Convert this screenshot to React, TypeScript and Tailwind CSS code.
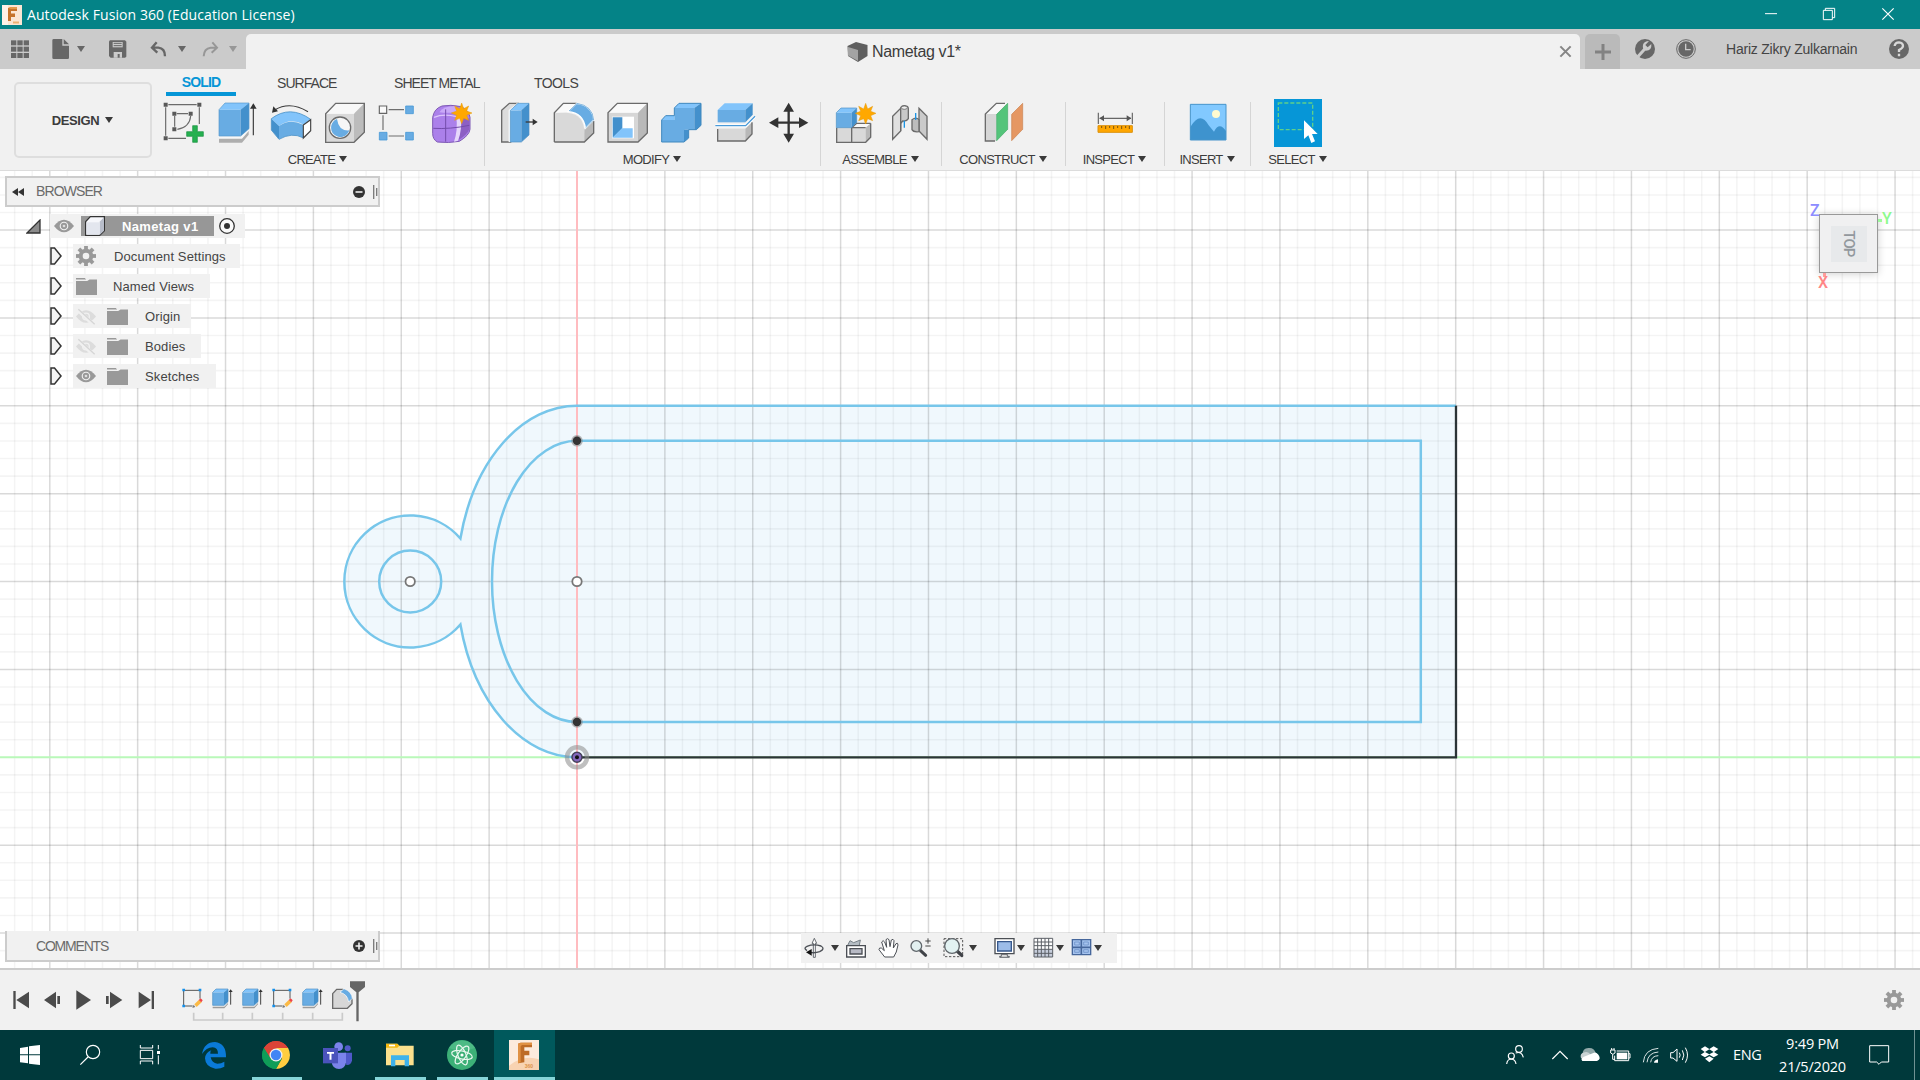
import React from "react";

type IconProps = { vb: string; className?: string; children: React.ReactNode };

function Ic({ vb, className = "", children }: IconProps) {
  return (
    <svg viewBox={vb} className={"block shrink-0 overflow-visible " + className} fill="none">
      {children}
    </svg>
  );
}

const BLUE = "#68ace3";
const LIGHT = "#82c4fb";
const DARK = "#4390cc";
const EDGE = "#6b6b6b";
const STAR = "1385,309 1391,326 1406,318 1400,333 1416,339 1400,346 1406,361 1391,355 1385,371 1379,355 1364,361 1370,346 1354,339 1370,333 1364,318 1379,326";

function Caret({ className = "", color = "#3a3a3a" }: { className?: string; color?: string }) {
  return (
    <svg viewBox="0 0 10 10" className={"block h-[10px] w-[10px] shrink-0 " + className}>
      <path d="M1 2H9L5 8Z" fill={color} />
    </svg>
  );
}

/* ---------- Window chrome ---------- */

function TitleBar() {
  return (
    <div className="flex h-[29px] items-center bg-[#048387] text-white">
      <svg viewBox="0 0 20 20" className="ml-[2px] h-5 w-5">
        <rect width="20" height="20" fill="#fbe6d3" />
        <path d="M0 0H6V20H0Z" fill="#fdf2e8" />
        <path d="M6 3H15V6H9V8.500H13V12H9V16H6Z" fill="#c5732b" />
        <path d="M6 3L8 2H15V4H9Z" fill="#e39a4c" />
        <rect x="11" y="16.500" width="6" height="2" fill="#ecb173" />
      </svg>
      <span className="ml-[5px] whitespace-nowrap text-[14px] leading-none tracking-[0.08px]" style={{ fontFamily: '"Open Sans", sans-serif' }}>
        Autodesk Fusion 360 (Education License)
      </span>
      <div className="ml-auto flex h-full">
        <Ic vb="675 0 174 87" className="h-[29px] w-[58px]"><path d="M675 41H711" stroke="#fff" strokeWidth="3" /></Ic>
        <Ic vb="849 0 177 87" className="h-[29px] w-[59px]"><path d="M850 31H877V59H850ZM856 31V25H884V53H877" stroke="#fff" strokeWidth="3" /></Ic>
        <Ic vb="1026 0 114 87" className="h-[29px] w-[38px]"><path d="M1027 25L1061 59M1061 25L1027 59" stroke="#fff" strokeWidth="3.500" /></Ic>
      </div>
    </div>
  );
}

function TabStrip() {
  const g = "#676767";
  return (
    <div className="flex h-10 bg-[#cbcbcb]">
      <div className="flex h-10 w-[246px] items-center">
        <Ic vb="30 117 60 60" className="ml-[10px] h-5 w-5">
          {[0, 1, 2].map((r) => [0, 1, 2].map((c) => <rect key={r + "-" + c} x={33 + c * 19} y={121 + r * 19} width="16" height="15" fill={g} />))}
        </Ic>
        <Ic vb="156 117 60 60" className="ml-[22px] h-5 w-5">
          <path d="M161 117H187V137H207V173Q207 177 203 177H161Q157 177 157 173V121Q157 117 161 117Z" fill={g} />
          <path d="M191 117L207 133H191Z" fill={g} />
        </Ic>
        <Caret className="ml-[4px]" color={g} />
        <Ic vb="324 117 60 60" className="ml-[22px] h-5 w-5">
          <path d="M330 121H375L379 125V170L375 173H332L327 168V124Z" fill={g} />
          <path d="M338 126H368V142H338Z" fill="#cbcbcb" />
          <path d="M341 130H365M341 137H365" stroke={g} strokeWidth="3" />
          <path d="M341 173V156H366V173H359V162H353V173Z" fill="#cbcbcb" />
        </Ic>
        <Ic vb="447 117 60 60" className="ml-[21px] h-5 w-5"><path d="M470 127L456 143L472 158M457 143H475Q495 145 495 169" stroke={g} strokeWidth="7" /></Ic>
        <Caret className="ml-[8px]" color={g} />
        <Ic vb="603 117 60 60" className="ml-[14px] h-5 w-5"><path d="M637 127L651 143L635 158M650 143H632Q612 145 611 169" stroke="#979797" strokeWidth="6" /></Ic>
        <Caret className="ml-[7px]" color="#979797" />
      </div>
      <div className="mt-[5px] flex h-[35px] w-[1334px] items-center rounded-t-[5px] bg-[#f1f1f1]">
        <svg viewBox="0 0 21 20" className="ml-[601px] h-5 w-[21px]">
          <path d="M0.500 4L9 0L20.500 3V14L11 20L1 14Z" fill="#5f5f5f" />
          <path d="M1 5L11 8V19L1 13.500Z" fill="#a3a3a3" />
        </svg>
        <span className="ml-[4px] mt-px whitespace-nowrap text-[16px] leading-none tracking-[-0.35px] text-[#3c3c3c]">Nametag v1*</span>
        <Ic vb="60 136 38 38" className="ml-auto mr-[8px] h-[13px] w-[13px]"><path d="M64 140L94 170M94 140L64 170" stroke="#858585" strokeWidth="6" /></Ic>
      </div>
      <div className="ml-[5px] mt-[5px] flex h-[35px] w-[35px] items-center justify-center rounded-t-[5px] bg-[#bababa]">
        <Ic vb="165 128 48 48" className="h-4 w-4"><path d="M165 152H213M189 128V176" stroke="#828282" strokeWidth="9" /></Ic>
      </div>
      <div className="flex h-10 flex-1 items-center">
        <Ic vb="285 117 60 60" className="ml-[15px] h-5 w-5">
          <circle cx="315" cy="147" r="30" fill={g} />
          <path d="M292 172L315 146" stroke="#cbcbcb" strokeWidth="9" />
          <path d="M334 132Q336 152 318 152Q306 148 309 134Q313 123 327 123L316 135L323 142Z" fill="#cbcbcb" />
        </Ic>
        <Ic vb="408 117 60 60" className="ml-[21px] h-5 w-5">
          <circle cx="438" cy="147" r="28" stroke={g} strokeWidth="3" />
          <circle cx="438" cy="147" r="23" fill={g} />
          <path d="M437 131V149H452" stroke="#cbcbcb" strokeWidth="4" />
        </Ic>
        <span className="ml-[30px] whitespace-nowrap text-[14px] leading-none tracking-[-0.22px] text-[#444]">Hariz Zikry Zulkarnain</span>
        <Ic vb="1047 117 60 60" className="ml-auto mr-[11px] h-5 w-5">
          <circle cx="1077" cy="147" r="30" fill={g} />
          <path d="M1064 138Q1065 127 1077 127Q1089 128 1089 138Q1089 144 1077 150V156M1077 161V169" stroke="#d8d8d8" strokeWidth="7" />
        </Ic>
      </div>
    </div>
  );
}

/* ---------- Ribbon ---------- */

const big = "h-11 w-11";

function CreateIcons() {
  return (
    <>
      <Ic vb="486 303 132 132" className={big}>
        <path d="M505 314H590M497 322V407M598 322V372M505 415H558" stroke={EDGE} strokeWidth="3.500" />
        <path d="M530 341H564M524 348V380M572 348Q569 382 532 388" stroke={EDGE} strokeWidth="3.500" />
        <path d="M491 308h12v12h-12zM592 308h12v12h-12zM491 409h12v12h-12zM517 335h12v12h-12zM566 335h12v12h-12zM517 382h12v12h-12z" fill="#595959" />
        <path d="M578 377H592V395H610V409H592V427H578V409H560V395H578Z" fill="#26b050" stroke="#179040" strokeWidth="2" />
      </Ic>
      <Ic vb="648 303 132 132" className={big}>
        <path d="M657 414H724L746 392V404L726 428H657Z" fill="#aeaeae" />
        <path d="M657 408H724L746 386V393L726 416H657Z" fill="#f7f7f7" />
        <path d="M657 329H722V408H657Z" fill={BLUE} /><path d="M657 329L675 309H747L723 329Z" fill={LIGHT} /><path d="M722 329L747 309V386L722 408Z" fill={DARK} />
        <path d="M657 408V329L675 309H747V386L722 408Z" stroke="#5598cc" strokeWidth="2" />
        <path d="M760 406V320" stroke="#3a3a3a" strokeWidth="3.500" /><path d="M750 326L760 310L770 326Z" fill="#333" />
      </Ic>
      <Ic vb="810 303 132 132" className={big}>
        <path d="M824 330Q870 302 924 335" stroke="#3a3a3a" strokeWidth="3.500" /><path d="M816 338L820 319L834 334Z" fill="#333" />
        <path d="M814 356Q870 314 932 358L912 374Q870 352 837 378Z" fill={LIGHT} />
        <path d="M814 356L837 378V418L814 390Z" fill={DARK} />
        <path d="M837 378Q870 354 909 374V413Q875 396 837 418Z" fill={BLUE} />
        <path d="M814 356Q870 314 932 358M814 356V390L837 418Q875 396 909 413" stroke="#4d93c8" strokeWidth="2.500" />
        <path d="M910 375L932 359V392L910 414Z" fill="#fff" stroke="#444" strokeWidth="3.500" />
      </Ic>
      <Ic vb="972 303 132 132" className={big}>
        <path d="M977 341H1062V427H977Z" fill="#d9d9d9" /><path d="M977 341L1007 310H1093L1062 341Z" fill="#f8f8f8" /><path d="M1062 341L1093 310V397L1062 427Z" fill="#bcbcbc" />
        <path d="M977 427V341L1007 310H1093V397L1062 427Z" stroke={EDGE} strokeWidth="4" />
        <circle cx="1020" cy="383" r="32" fill="#f6f6f6" stroke={EDGE} strokeWidth="4" />
        <path d="M1011 357A28 28 0 1 0 1048 391Q1016 394 1011 357Z" fill={BLUE} />
      </Ic>
      <Ic vb="1134 303 132 132" className={big}>
        <path d="M1166 329H1212M1149 346V390M1166 408H1212" stroke="#6f6f6f" strokeWidth="3.500" />
        <path d="M1138 318h22v22h-22z" fill="#fafafa" stroke="#666" strokeWidth="3.500" />
        <path d="M1217 318h23v23h-23zM1138 397h23v23h-23zM1217 397h23v23h-23z" fill={BLUE} stroke="#4b9ad6" strokeWidth="2.500" />
      </Ic>
      <Ic vb="1296 303 132 132" className={big}>
        <path d="M1298 352Q1302 326 1326 318Q1350 313 1385 320Q1408 335 1410 352V388Q1408 406 1378 424Q1345 430 1312 426Q1298 418 1298 400Z" fill="#ab80ea" stroke="#7f5ab5" strokeWidth="3" />
        <path d="M1318 337Q1330 318 1366 318L1378 335Q1350 341 1318 337Z" fill="#c9a8f8" />
        <path d="M1376 358Q1390 350 1408 356V388Q1402 404 1376 420Z" fill="#8c5fc4" />
        <path d="M1369 350L1382 344Q1388 385 1374 422L1362 425Q1374 390 1369 350Z" fill="#e6d7fb" />
        <path d="M1302 352Q1330 340 1370 350" stroke="#dcc5fb" strokeWidth="4" />
        <path d="M1337 328V425M1300 385Q1350 388 1408 376" stroke="#734cab" strokeWidth="3" />
        <polygon points={STAR} fill="#ffa800" stroke="#e49a10" strokeWidth="1.500" />
      </Ic>
    </>
  );
}

function ModifyIcons() {
  return (
    <>
      <Ic vb="54 48 132 132" className={big}>
        <path d="M65 76L88 55H112L92 76V171H65Z" fill="#dcdcdc" stroke={EDGE} strokeWidth="4" />
        <path d="M86 76L110 55H114V171H86Z" fill="#fff" />
        <path d="M91 76H124V171H91Z" fill={BLUE} /><path d="M91 76L114 55H147L124 76Z" fill={LIGHT} /><path d="M124 76L147 55V150L124 171Z" fill={DARK} />
        <path d="M91 171V76L114 55H147V150L124 171Z" stroke="#4c90c4" strokeWidth="2" />
        <path d="M137 111H162" stroke="#3a3a3a" strokeWidth="4" /><path d="M158 101L173 111L158 121Z" fill="#333" />
      </Ic>
      <Ic vb="216 48 132 132" className={big}>
        <path d="M223 83H261Q313 88 313 142V171H223Z" fill="#d9d9d9" /><path d="M223 83L250 55H288L266 81Z" fill="#fafafa" /><path d="M313 132L341 105V144L313 171Z" fill="#b9b9b9" />
        <path d="M223 171V83L250 55H290M341 108V144L313 171H223" stroke={EDGE} strokeWidth="4" />
        <path d="M264 80L290 55Q338 62 341 105L316 130Q311 84 264 80Z" fill={BLUE} stroke="#fff" strokeWidth="4" />
        <path d="M267 78L291 55Q338 62 341 105L317 128" stroke="#4b94cc" strokeWidth="2" />
      </Ic>
      <Ic vb="378 48 132 132" className={big}>
        <path d="M384 83H474V171H384Z" fill="#d6d6d6" /><path d="M384 83L412 55H502L474 83Z" fill="#fafafa" /><path d="M474 83L502 55V144L474 171Z" fill="#b9b9b9" />
        <path d="M384 171V83L412 55H502V144L474 171Z" stroke={EDGE} strokeWidth="4" />
        <path d="M396 95H462V160H396Z" fill="#fff" /><path d="M398 97H427V130L398 158Z" fill={DARK} /><path d="M398 158L426 130H458V158Z" fill={LIGHT} />
      </Ic>
      <Ic vb="540 48 132 132" className={big}>
        <path d="M545 105H583V69H643V134H613V171H545Z" fill={BLUE} /><path d="M545 105L557 92H583V105ZM583 69L597 55H663L643 69Z" fill={LIGHT} /><path d="M643 69L663 55V121L649 134H626V159L612 171V134H643Z" fill={DARK} />
        <path d="M545 171V105L557 92H583V69L597 55H663V121L649 134H626V159L612 171Z" stroke="#3f88be" strokeWidth="3" />
      </Ic>
      <Ic vb="702 48 132 132" className={big}>
        <path d="M713 75H796V112H713Z" fill={BLUE} /><path d="M713 75L734 55H818L796 75Z" fill={LIGHT} /><path d="M796 75L818 55V89L796 112Z" fill={DARK} />
        <path d="M713 131H796V168H713Z" fill="#d8d8d8" /><path d="M796 131L816 112V147L796 168Z" fill="#b8b8b8" />
        <path d="M713 132V168H796L816 147V112" stroke={EDGE} strokeWidth="4" />
        <path d="M706 122H797L825 94" stroke="#fff" strokeWidth="9" /><path d="M706 122H797L825 94" stroke="#4a9ad8" strokeWidth="4" />
      </Ic>
      <Ic vb="864 48 132 132" className={big}>
        <path d="M926 75V150M888 113H964" stroke="#333" strokeWidth="7" />
        <path d="M926 53L942 80H910ZM926 173L942 146H910ZM867 113L895 97V129ZM985 113L957 97V129Z" fill="#333" />
      </Ic>
    </>
  );
}

function AssembleIcons() {
  return (
    <>
      <Ic vb="1059 48 132 132" className={big}>
        <path d="M1069 128H1116V172H1069Z" fill="#d9d9d9" /><path d="M1116 128H1157V172H1116Z" fill="#d9d9d9" />
        <path d="M1116 128L1130 115H1172L1157 128Z" fill="#f8f8f8" /><path d="M1157 128L1172 115V157L1157 172Z" fill="#b9b9b9" />
        <path d="M1070 128V172H1157L1172 157V115M1115 172V128L1130 115H1172M1115 128H1157" stroke={EDGE} strokeWidth="4" />
        <path d="M1069 83H1115V128H1069Z" fill={BLUE} /><path d="M1069 83L1083 69H1130L1115 83Z" fill={LIGHT} /><path d="M1115 83L1130 69V112L1115 128Z" fill={DARK} />
        <path d="M1069 128V83L1083 69H1130V112L1115 128Z" stroke="#4c90c4" strokeWidth="2" />
        <g transform="translate(-228 -254)"><polygon points={STAR} fill="#ffa800" stroke="#e49a10" strokeWidth="1.500" /></g>
      </Ic>
      <Ic vb="1221 48 132 132" className={big}>
        <path d="M1238 94L1262 70V138L1238 163Z" fill="#e0e0e0" stroke={EDGE} strokeWidth="4" />
        <path d="M1262 138V72Q1262 62 1274 62Q1285 63 1285 71V101Q1280 110 1268 108L1262 116" fill="#c9c9c9" stroke={EDGE} strokeWidth="4" />
        <ellipse cx="1273" cy="68" rx="9" ry="5" fill="#eee" stroke={EDGE} strokeWidth="2.500" />
        <path d="M1317 70L1341 94V163L1317 138Z" fill="#cacaca" stroke={EDGE} strokeWidth="4" />
        <path d="M1317 104Q1308 95 1296 104V134Q1300 142 1317 140Z" fill="#bdbdbd" stroke={EDGE} strokeWidth="4" />
        <path d="M1273 107V128M1307 84V105" stroke="#1c94e4" strokeWidth="4" />
      </Ic>
    </>
  );
}

type GroupProps = { label: string; w: string; pl?: string; children: React.ReactNode };

function Group({ label, w, pl = "justify-center", children }: GroupProps) {
  return (
    <div className={"flex h-full shrink-0 flex-col " + w}>
      <div className={"mt-[29px] flex h-[50px] items-center gap-[10px] " + pl}>{children}</div>
      <div className="mt-px flex h-[20px] items-center justify-center gap-[3px]">
        <span className="whitespace-nowrap text-[13px] leading-none tracking-[-0.7px] text-[#3c3c3c]">{label}</span>
        <Caret className="-mt-px" />
      </div>
    </div>
  );
}

function Sep() {
  return <div className="mt-[33px] h-[64px] w-px shrink-0 bg-[#d5d5d5]" />;
}

function Ribbon() {
  return (
    <div className="relative flex h-[102px] border-b border-[#dcdcdc] bg-[#f1f1f1]">
      <div className="ml-[14px] mt-[13px] flex h-[76px] w-[138px] shrink-0 items-center justify-center gap-[5px] rounded-[5px] border-2 border-[#dedede]">
        <span className="text-[13px] font-bold leading-none tracking-[-0.4px] text-[#3c3c3c]">DESIGN</span>
        <Caret />
      </div>
      <Group label="CREATE" w="w-[332px]" pl="pl-[10px]"><CreateIcons /></Group>
      <Sep />
      <Group label="MODIFY" w="w-[335px]" pl="pl-[13px]"><ModifyIcons /></Group>
      <Sep />
      <Group label="ASSEMBLE" w="w-[120px]" pl="pl-[12px]"><AssembleIcons /></Group>
      <Sep />
      <Group label="CONSTRUCT" w="w-[123px]">
        <Ic vb="129 48 132 132" className={big}>
          <path d="M139 87H172V168H139Z" fill="#d6d6d6" /><path d="M139 87L172 55H202L172 87Z" fill="#f8f8f8" />
          <path d="M168 168H139V87L172 55H198" stroke={EDGE} strokeWidth="4" />
          <path d="M173 88L206 55V133L173 167Z" fill="#54c47a" stroke="#45ab68" strokeWidth="2" />
          <path d="M218 88L251 55V133L218 167Z" fill="#e59763" stroke="#cc8351" strokeWidth="2" />
        </Ic>
      </Group>
      <Sep />
      <Group label="INSPECT" w="w-[98px]">
        <Ic vb="462 48 132 132" className={big}>
          <path d="M478 83V117M580 83V117M482 100H576" stroke="#666" strokeWidth="3.500" /><path d="M481 100L495 91V109ZM577 100L563 91V109Z" fill="#555" />
          <path d="M477 122H580V142H477Z" fill="#ffa600" stroke="#dc920e" strokeWidth="3" />
          <path d="M488 123V129M500 123V132M512 123V129M524 123V132M536 123V129M548 123V132M560 123V129M571 123V132" stroke="#7a5410" strokeWidth="3" />
        </Ic>
      </Group>
      <Sep />
      <Group label="INSERT" w="w-[85px]">
        <Ic vb="738 48 132 132" className={big}>
          <path d="M751 58H858V165H751Z" fill="#82c9ff" />
          <path d="M751 126Q781 76 806 121L822 140Q838 109 858 138V165H751Z" fill="#3e93ce" />
          <circle cx="828" cy="87" r="12" fill="#fffbd0" /><path d="M751 58H858V165H751Z" stroke="#4694cb" strokeWidth="3" />
        </Ic>
      </Group>
      <Sep />
      <Group label="SELECT" w="w-[94px]">
        <Ic vb="1005 42 144 144" className="h-12 w-12">
          <path d="M1005 42H1149V186H1005Z" fill="#0696d7" />
          <path d="M1018 54H1121V134H1018Z" stroke="#5fd08a" strokeWidth="4" strokeDasharray="12 6" />
          <path d="M1095 106V162L1108 151L1117 174L1128 169L1119 147H1136Z" fill="#fff" />
        </Ic>
      </Group>
      <div className="absolute left-[166px] top-[4px] flex h-[23px] text-[14px] text-[#444]">
        <div className="flex w-[70px] items-center justify-center border-b-[4px] border-[#0696d7] pb-px font-bold leading-none tracking-[-0.85px] text-[#0696d7]">SOLID</div>
        <div className="ml-[41px] w-[60px] whitespace-nowrap pt-[1px] leading-[18px] tracking-[-0.95px]">SURFACE</div>
        <div className="ml-[57px] w-[84px] whitespace-nowrap pt-[1px] leading-[18px] tracking-[-0.95px]">SHEET METAL</div>
        <div className="ml-[56px] whitespace-nowrap pt-[1px] leading-[18px] tracking-[-0.6px]">TOOLS</div>
      </div>
    </div>
  );
}

/* ---------- Canvas ---------- */

const MINOR = 17.574;
const OX = 577;
const OY = 757.3;

function lines(origin: number, from: number, to: number) {
  const out: { p: number; major: boolean }[] = [];
  for (let k = Math.ceil((from - origin) / MINOR); origin + k * MINOR <= to; k++) {
    out.push({ p: origin + k * MINOR, major: k % 5 === 0 });
  }
  return out;
}

function SketchCanvas() {
  const vs = lines(OX, 0, 1920);
  const hs = lines(OY, 171, 968);
  const outer = "M577 405.700A120.200 175.800 0 0 0 460.400 538.500A66 66 0 1 0 460.400 624.500A120.200 175.800 0 0 0 577 757.300";
  return (
    <svg viewBox="0 171 1920 797" className="absolute inset-0 h-full w-full" fill="none">
      <path d={outer + "H1456V405.700Z"} fill="#f0f8fd" />
      <g stroke="#000" strokeOpacity="0.045" strokeWidth="1.600">
        {vs.filter((l) => !l.major).map((l) => <path key={l.p} d={`M${l.p} 171V968`} />)}
        {hs.filter((l) => !l.major).map((l) => <path key={l.p} d={`M0 ${l.p}H1920`} />)}
      </g>
      <g stroke="#000" strokeOpacity="0.15" strokeWidth="1.500">
        {vs.filter((l) => l.major && l.p !== OX).map((l) => <path key={l.p} d={`M${l.p} 171V968`} />)}
        {hs.filter((l) => l.major && l.p !== OY).map((l) => <path key={l.p} d={`M0 ${l.p}H1920`} />)}
      </g>
      <path d="M577 171V968" stroke="#ffbcc0" strokeWidth="2" />
      <path d="M0 757.300H1920" stroke="#b9f8b9" strokeWidth="2" />
      <g stroke="#77c6ea" strokeWidth="2.500">
        <path d={outer} />
        <path d="M577 405.700H1456" />
        <path d="M577 440.800H1420.800V722H577A85 140.600 0 0 1 577 440.800Z" />
        <circle cx="410.200" cy="581.500" r="31" />
      </g>
      <path d="M577 757.300H1456V405.700" stroke="#2c3437" strokeWidth="2.300" />
      {[440.8, 722].map((y) => (
        <g key={y}><circle cx="577" cy={y} r="5.800" fill="#888" opacity=".6" /><circle cx="577" cy={y} r="4.200" fill="#333" /></g>
      ))}
      {[410.2, 577].map((x) => <circle key={x} cx={x} cy="581.500" r="4.700" fill="#fff" stroke="#777" strokeWidth="1.800" />)}
      <circle cx="577" cy="757.300" r="10" stroke="#8b8b8b" strokeOpacity=".55" strokeWidth="4.500" />
      <circle cx="577" cy="757.300" r="5" fill="#8467bd" stroke="#45405a" strokeWidth="1.500" />
      <circle cx="577" cy="757.300" r="2" fill="#111" />
    </svg>
  );
}

function ViewCube() {
  return (
    <div className="absolute left-[1806px] top-[27px] h-[100px] w-[90px] text-[16px] font-medium leading-none" style={{ fontFamily: "Roboto, sans-serif" }}>
      <div className="absolute left-[13px] top-[16px] flex h-[59px] w-[59px] items-center justify-center border border-[#999] bg-[#f0f0f1] shadow-[0_1px_8px_rgba(0,0,0,0.18)]">
        <div className="flex h-[36px] w-[36px] items-center justify-center bg-[#e7e9eb]">
          <span className="rotate-90 text-[15px] tracking-[-1px] text-[#92989d]">TOP</span>
        </div>
      </div>
      <span className="absolute left-[4px] top-[5px] text-[#8d8cff]">Z</span>
      <span className="absolute left-[76px] top-[13px] text-[#8dfa8d]">Y</span>
      <span className="absolute left-[72px] top-[21px] h-[3px] w-[4px] bg-[#9cfa9c]" />
      <span className="absolute left-[17px] top-[75px] h-[4px] w-[3px] bg-[#ff9b9b]" />
      <span className="absolute left-[12px] top-[77px] text-[#ff8585]">X</span>
    </div>
  );
}

function Eye() {
  return (
    <svg viewBox="0 0 60 40" className="h-[14px] w-5 shrink-0">
      <path d="M0 20Q30-18 60 20Q30 58 0 20Z" fill="#999" />
      <circle cx="30" cy="20" r="13" fill="#f1f1f1" /><circle cx="30" cy="20" r="9.500" fill="#999" /><circle cx="30" cy="20" r="4" fill="#ddd" />
    </svg>
  );
}

function EyeOff() {
  return (
    <svg viewBox="0 0 60 50" className="h-[17px] w-5 shrink-0">
      <path d="M0 25Q30-13 60 25Q30 63 0 25Z" fill="#dcdcdc" />
      <circle cx="30" cy="25" r="10" stroke="#f1f1f1" strokeWidth="4" fill="none" />
      <path d="M3 3L53 50" stroke="#f1f1f1" strokeWidth="11" /><path d="M7 3L56 48" stroke="#d6d6d6" strokeWidth="4" />
    </svg>
  );
}

function Folder() {
  return (
    <svg viewBox="0 0 62 50" className="h-[17px] w-[21px] shrink-0">
      <path d="M0 0H26L30 4H0ZM0 9H33L40 4H62V50H0Z" fill="#999" />
    </svg>
  );
}

function Gear() {
  return (
    <svg viewBox="-10 -10 20 20" className="h-5 w-5 shrink-0">
      {[0, 45, 90, 135].map((a) => <rect key={a} x="-1.900" y="-10" width="3.800" height="20" fill="#999" transform={`rotate(${a})`} />)}
      <circle r="7.300" fill="#999" /><circle r="3.300" fill="#f1f1f1" />
    </svg>
  );
}

function Arrow() {
  return (
    <svg viewBox="0 0 12 18" className="h-[18px] w-3 shrink-0">
      <path d="M1 1H4.500L11 9L4.500 17H1Z" fill="#f4f4f4" stroke="#333" strokeWidth="1.500" />
    </svg>
  );
}

function TreeRow({ label, w, kind }: { label: string; w: string; kind: "gear" | "folder" | "off" | "on" }) {
  const leaf = kind === "off" || kind === "on";
  return (
    <div className="flex h-[30px] items-center pl-[50px]">
      <Arrow />
      <div className={"ml-[11px] flex h-6 items-center bg-[#f1f1f1] pl-[3px] " + w}>
        {kind === "gear" && <Gear />}
        {kind === "folder" && <Folder />}
        {kind === "off" && <EyeOff />}
        {kind === "on" && <Eye />}
        {leaf && <div className="ml-[11px]"><Folder /></div>}
        <span className={"whitespace-nowrap text-[13px] leading-none tracking-[0.11px] text-[#444] " + (kind === "gear" ? "ml-[18px]" : kind === "folder" ? "ml-[16px]" : "ml-[17px]")}>{label}</span>
      </div>
    </div>
  );
}

function PanelHeader({ label, plus }: { label: string; plus?: boolean }) {
  return (
    <div className={"flex w-[375px] items-center border-2 border-[#cccccc] bg-[#f1f1f1] " + (plus ? "h-[31px] border-t-0" : "h-[31px]")}>
      <svg viewBox="0 0 12 8" className="ml-[5px] h-2 w-3">{!plus && <path d="M6 0V8L0 4ZM12 0V8L6 4Z" fill="#333" />}</svg>
      <span className={"ml-[12px] text-[14px] leading-none text-[#6b6b6b] " + (plus ? "tracking-[-1.2px]" : "-mt-px tracking-[-0.9px]")}>{label}</span>
      <svg viewBox="0 0 12 12" className="ml-auto h-3 w-3">
        <circle cx="6" cy="6" r="6" fill="#333" /><path d={plus ? "M2.500 6H9.500M6 2.500V9.500" : "M2.500 6H9.500"} stroke="#f1f1f1" strokeWidth="1.600" />
      </svg>
      <svg viewBox="0 0 5 14" className="ml-[8px] h-[14px] w-[5px]"><path d="M.7 0V14M3.700 3V11" stroke="#777" strokeWidth="1.300" /></svg>
    </div>
  );
}

function Browser() {
  return (
    <div className="absolute left-0 top-[5px] flex flex-col">
      <div className="pl-[5px]"><PanelHeader label="BROWSER" /></div>
      <div className="mt-[4px] flex h-[30px] items-center pl-[26px]">
        <svg viewBox="0 0 15 15" className="h-[15px] w-[15px]"><path d="M14 1V14H1Z" fill="#8b8b8b" stroke="#333" strokeWidth="1.300" /></svg>
        <div className="ml-[9px] flex h-6 w-[195px] items-center bg-[#f1f1f1]">
          <div className="ml-[4px]"><Eye /></div>
          <div className="ml-[7px] flex h-5 w-[133px] items-center bg-[#979797]">
            <svg viewBox="0 0 60 60" className="ml-[4px] h-5 w-5">
              <path d="M2 17L16 2H58V44L44 58H2Z" fill="#f6f7fb" stroke="#333" strokeWidth="4" /><path d="M44 17L57 4V44L44 57Z" fill="#b8bdca" /><path d="M4 19H44V56H4Z" fill="#e3e6ee" />
            </svg>
            <span className="ml-[17px] whitespace-nowrap text-[13px] font-bold leading-none tracking-[0.35px] text-white">Nametag v1</span>
          </div>
          <svg viewBox="0 0 16 16" className="ml-[5px] h-4 w-4"><circle cx="8" cy="8" r="7.300" fill="#fafafa" stroke="#333" strokeWidth="1.300" /><circle cx="8" cy="8" r="3" fill="#333" /></svg>
        </div>
      </div>
      <TreeRow label="Document Settings" w="w-[167px]" kind="gear" />
      <TreeRow label="Named Views" w="w-[137px]" kind="folder" />
      <TreeRow label="Origin" w="w-[118px]" kind="off" />
      <TreeRow label="Bodies" w="w-[128px]" kind="off" />
      <TreeRow label="Sketches" w="w-[143px]" kind="on" />
    </div>
  );
}

function NavBar() {
  const s = "#4b4f55";
  return (
    <div className="absolute left-[801px] top-[762px] flex h-[30px] w-[316px] items-center bg-[#f1f1f1]">
      <Ic vb="72 48 72 72" className="ml-[2px] h-6 w-6">
        <path d="M103 112V70H99L106 55L113 70H109V112Z" fill="#fff" stroke={s} strokeWidth="2.500" />
        <path d="M84 92Q72 84 84 79Q104 71 126 78Q140 86 122 95Q108 100 92 97" stroke={s} strokeWidth="4" /><path d="M81 97L98 87V107Z" fill="#111" />
      </Ic>
      <Caret className="ml-[3px]" />
      <Ic vb="192 48 72 72" className="ml-[4px] h-6 w-6">
        <path d="M203 76L210 62L221 68L241 60L238 75" fill="#b5bdc4" stroke="#768087" strokeWidth="3" />
        <path d="M200 77H256V111H200Z" fill="#fff" stroke={s} strokeWidth="4" /><path d="M210 86H246V102H210Z" fill="#b8bac5" stroke={s} strokeWidth="4" />
      </Ic>
      <Ic vb="291 48 72 72" className="ml-[9px] h-6 w-6">
        <path d="M314 111L297 89Q297 82 304 84L313 92L305 66Q309 58 314 66L320 82L318 59Q322 53 327 59L330 80L334 60Q340 55 342 62L340 84L348 71Q354 67 354 75Q350 99 341 111Z" fill="#fff" stroke={s} strokeWidth="3" />
      </Ic>
      <Ic vb="387 48 72 72" className="ml-[8px] h-6 w-6">
        <path d="M421 91L437 106" stroke="#404348" strokeWidth="9" strokeLinecap="round" />
        <circle cx="409" cy="78" r="16" fill="#e2f0f0" stroke="#60666b" strokeWidth="4" /><path d="M436 63H452M444 55V71M436 78H452" stroke="#444" strokeWidth="3" />
      </Ic>
      <Ic vb="486 48 72 72" className="ml-[9px] h-6 w-6">
        <path d="M492 56H548V110H492Z" stroke="#555" strokeWidth="3" strokeDasharray="7 5" />
        <path d="M532 94L545 106" stroke="#404348" strokeWidth="10" strokeLinecap="round" /><circle cx="516" cy="78" r="22" fill="#e2f2f2" stroke="#60666b" strokeWidth="4" />
      </Ic>
      <Caret className="ml-[2px]" />
      <Ic vb="639 48 72 72" className="ml-[15px] h-6 w-6">
        <path d="M645 56H702V101H645Z" fill="#fff" stroke={s} strokeWidth="4" /><path d="M653 65H694V93H653Z" fill="#9cbce8" stroke="#37588c" strokeWidth="4" />
        <path d="M664 103H682V109H688V112H659V109H664Z" fill="#ddd" stroke={s} strokeWidth="2.500" />
      </Ic>
      <Caret className="-ml-px" />
      <Ic vb="756 48 66 72" className="ml-[6px] h-6 w-[22px]">
        <path d="M762 55H818V111H762Z" fill="#fff" /><path d="M762 89H818V111H762Z" fill="#c6cddb" />
        <path d="M762 55H818V111H762ZM773 55V111M784 55V111M795 55V111M806 55V111M762 66H818M762 77H818M762 88H818M762 100H818" stroke="#5c6067" strokeWidth="3" />
      </Ic>
      <Caret className="ml-px" />
      <Ic vb="873 48 66 72" className="ml-[6px] h-6 w-[22px]">
        <path d="M877 59H932V104H877Z" fill="#a5c3ee" stroke="#46679c" strokeWidth="4" /><path d="M904 59V104M877 82H932" stroke="#46679c" strokeWidth="5" />
        <path d="M884 66H898V75H884ZM911 66H925V75H911ZM884 89H898V97H884ZM911 89H925V97H911Z" stroke="#6f93c9" strokeWidth="2.500" />
      </Ic>
      <Caret />
    </div>
  );
}

/* ---------- Timeline ---------- */

function SketchStep({ vb, dx }: { vb: string; dx: number }) {
  return (
    <Ic vb={vb} className="h-6 w-[30px]">
      <g transform={`translate(${dx} 0)`}>
        <path d="M551 211H600V236M551 211V258H578" stroke="#555" strokeWidth="3" />
        <path d="M547 206h8v8h-8zM596 206h8v8h-8zM547 254h8v8h-8z" fill="#1590ea" />
        <path d="M577 264L581 254L586 261Z" fill="#777" /><path d="M583 253L597 239L605 247L590 261Z" fill="#fbb944" /><path d="M596 240L602 235L608 241L604 247Z" fill="#ee4747" />
      </g>
    </Ic>
  );
}

function ExtrudeStep({ vb, dx }: { vb: string; dx: number }) {
  return (
    <Ic vb={vb} className="h-6 w-[30px]">
      <g transform={`translate(${dx} 0)`}>
        <path d="M638 260H673L684 249V253L673 265H638Z" fill="#9b9b9b" />
        <path d="M638 217H672V256H638Z" fill={BLUE} /><path d="M638 217L648 207H684L672 217Z" fill={LIGHT} /><path d="M672 217L684 207V245L672 256Z" fill={DARK} />
        <path d="M638 256V217L648 207H684V245L672 256Z" stroke="#4c90c4" strokeWidth="2" />
        <path d="M692 254V214" stroke="#444" strokeWidth="3" /><path d="M686 216L692 208L698 216Z" fill="#333" />
      </g>
    </Ic>
  );
}

function Timeline() {
  const c = "#4b4b4b";
  return (
    <div className="flex h-[62px] border-t-2 border-[#cccccc] bg-[#f1f1f1]">
      <div className="ml-[6px] mt-[18px] flex h-6">
        <Ic vb="18 204 93 72" className="h-6 w-[31px]"><path d="M40 213H47V267H40ZM87 215V265L49 240Z" fill={c} /></Ic>
        <Ic vb="111 204 93 72" className="h-6 w-[31px]"><path d="M168 215V265L132 240ZM172 228H180V252H172Z" fill={c} /></Ic>
        <Ic vb="204 204 93 72" className="h-6 w-[31px]"><path d="M229 211V269L273 240Z" fill={c} /></Ic>
        <Ic vb="297 204 93 72" className="h-6 w-[31px]"><path d="M330 215V265L367 240ZM318 228H326V252H318Z" fill={c} /></Ic>
        <Ic vb="390 204 93 72" className="h-6 w-[31px]"><path d="M455 213H462V267H455ZM416 215V265L453 240Z" fill={c} /></Ic>
      </div>
      <div className="relative ml-[19px] mt-[18px] flex w-[200px] flex-col">
        <div className="flex">
          <SketchStep vb="540 204 90 72" dx={0} />
          <ExtrudeStep vb="630 204 90 72" dx={0} />
          <ExtrudeStep vb="720 204 90 72" dx={90} />
          <SketchStep vb="810 204 90 72" dx={270} />
          <ExtrudeStep vb="900 204 90 72" dx={270} />
          <Ic vb="990 204 90 72" className="h-6 w-[30px]">
            <path d="M998 221L1010 208H1028Q1052 212 1056 240V251L1042 265H998Z" fill="#d7d7d7" stroke={EDGE} strokeWidth="4" />
            <path d="M1020 217L1032 206Q1055 215 1057 235L1046 246Q1042 222 1020 217Z" fill={BLUE} stroke="#fff" strokeWidth="2" />
          </Ic>
        </div>
        <Ic vb="540 276 540 30" className="h-[10px] w-[180px]">
          <path d="M581 278V300H1027V278M668 278V300M757 278V300M848 278V300M938 278V300" stroke="#cacaca" strokeWidth="5" />
        </Ic>
        <svg viewBox="1050 182 45 123" className="absolute left-[170px] top-[-7px] h-[41px] w-[15px]">
          <path d="M1050 183H1095V200L1076 216V303H1069V216L1050 200Z" fill="#666" />
        </svg>
      </div>
      <div className="ml-auto mr-[16px] mt-[20px]"><Gear /></div>
    </div>
  );
}

/* ---------- Taskbar ---------- */

function Task({ w, active, open, children }: { w: string; active?: boolean; open?: boolean; children: React.ReactNode }) {
  return (
    <div className={"relative flex h-[50px] shrink-0 items-center justify-center " + w + (active ? " bg-[#00595c]" : "")}>
      {children}
      {open && <div className={"absolute bottom-0 h-[3px] bg-[#86d5d8] " + (active ? "inset-x-0" : "inset-x-[5.500px]")} />}
    </div>
  );
}

function Taskbar() {
  return (
    <div className="flex h-[50px] bg-[#00393b] text-white">
      <Task w="w-[60px]">
        <Ic vb="60 375 60 60" className="h-5 w-5"><path d="M60 384L84 380V403H60ZM87 379L120 375V403H87ZM60 406H84V430L60 427ZM87 406H120V435L87 431Z" fill="#fff" /></Ic>
      </Task>
      <Task w="w-[60px]">
        <Ic vb="240 375 60 60" className="h-5 w-5"><circle cx="279" cy="396" r="20" stroke="#fff" strokeWidth="3.500" /><path d="M264 411L241 434" stroke="#fff" strokeWidth="3.500" /></Ic>
      </Task>
      <Task w="w-[60px]">
        <Ic vb="420 375 60 60" className="h-5 w-5">
          <path d="M421 375V384H458V375M421 391H458V416H421ZM421 433V423H458V433M475 375V388M475 406V433" stroke="#fff" strokeWidth="3" /><path d="M471 393h9v9h-9z" fill="#fff" />
        </Ic>
      </Task>
      <Task w="w-[66px]">
        <Ic vb="606 366 72 81" className="ml-[2px] h-[27px] w-6">
          <path d="M606 402Q612 367 645 366Q679 370 678 412H632Q636 430 652 431Q664 431 673 425V440Q661 447 646 446Q616 441 615 415Q617 397 634 391Q630 395 631 401H654Q654 383 638 382Q619 383 606 402Z" fill="#0a7ad8" />
        </Ic>
      </Task>
      <Task w="w-[61px]" open>
        <svg viewBox="-14 -14 28 28" className="-ml-px h-7 w-7">
          <path d="M0 0L-12.100-7A14 14 0 0 1 12.100-7Z" fill="#db4437" /><path d="M-12.100-7A14 14 0 0 0 0 14L6 3.500L0 0Z" fill="#0f9d58" /><path d="M12.100-7A14 14 0 0 1 0 14L6 3.500L0-7Z" fill="#ffcd40" />
          <path d="M-12.100-7L-6 3L0 6L6 3L0-7H12.100A14 14 0 0 0-12.100-7Z" fill="#db4437" /><path d="M-12.100-7L-5.500 3.200L0 6L5.500 3.200L0 14A14 14 0 0 1-12.100-7Z" fill="#0f9d58" />
          <circle r="6.500" fill="#f1f1f1" /><circle r="5.200" fill="#4285f4" />
        </svg>
      </Task>
      <Task w="w-[62px]">
        <Ic vb="969 363 87 81" className="-ml-px h-[27px] w-[29px]">
          <circle cx="1043" cy="382" r="9" fill="#5059c9" /><circle cx="1016" cy="377" r="13" fill="#7b83eb" /><path d="M1033 395H1056V418Q1054 433 1039 432Z" fill="#5059c9" />
          <path d="M995 395H1038V424Q1036 443 1017 444Q997 443 995 424Z" fill="#7b83eb" /><path d="M969 381H1014V427H969Z" fill="#4b53bc" />
          <path d="M981 393H1002V398H994.500V416H988.500V398H981Z" fill="#fff" />
        </Ic>
      </Task>
      <Task w="w-[62px]" open>
        <Ic vb="18 53 84 72" className="-ml-px h-6 w-7">
          <path d="M18 55H52L58 61H101V120H18Z" fill="#fbe18d" /><path d="M18 55H52L58 61L52 67H18Z" fill="#f5b911" /><path d="M27 58H45V63H27Z" fill="#fff" />
          <path d="M33 90H87V123H74V104H46V123H33Z" fill="#3fb3ea" />
        </Ic>
      </Task>
      <Task w="w-[62px]" open>
        <svg viewBox="-15 -15 30 30" className="h-[30px] w-[30px]">
          <circle r="15" fill="#3cb077" /><path d="M-13-7A15 15 0 0 1 13-7Q0-2-13-7Z" fill="#58c190" opacity=".6" />
          <g fill="none" stroke="#e9f7ef" strokeWidth="1.200"><ellipse rx="10.500" ry="4" transform="rotate(12)" /><ellipse rx="10.500" ry="4" transform="rotate(68)" /><ellipse rx="10.500" ry="4" transform="rotate(-55)" /></g>
          <circle r="1.600" fill="#fff" />
        </svg>
      </Task>
      <Task w="ml-px w-[61px]" active open>
        <Ic vb="387 45 90 90" className="-ml-px h-[30px] w-[30px]">
          <path d="M387 45H477V135H387Z" fill="#fcebdd" /><path d="M387 122Q430 88 477 103V135H387Z" fill="#f8d3b2" />
          <path d="M414 56L422 53H456V67H433V77H448V91H433V112L414 115Z" fill="#bd6b26" /><path d="M414 56L422 53H456V60H426L422 64V112L414 115Z" fill="#e09143" />
          <text x="434" y="129" fontSize="15" fontWeight="700" fontFamily="Liberation Sans, sans-serif" fill="#dd9148">360</text>
        </Ic>
      </Task>
      <div className="ml-auto flex h-[50px] items-center" style={{ fontFamily: '"Open Sans", sans-serif' }}>
        <Ic vb="75 219 60 72" className="h-6 w-5">
          <circle cx="117" cy="237" r="10" stroke="#fff" strokeWidth="3.500" /><circle cx="94" cy="258" r="9" stroke="#fff" strokeWidth="3.500" />
          <path d="M80 282Q82 267 94 267Q106 268 108 282M107 249Q125 243 130 262" stroke="#fff" strokeWidth="3.500" />
        </Ic>
        <Ic vb="216 219 48 72" className="ml-[27px] h-6 w-4"><path d="M217 267L240 244L263 267" stroke="#fff" strokeWidth="3.500" /></Ic>
        <Ic vb="300 219 60 72" className="ml-[12px] h-6 w-5">
          <path d="M308 253Q307 235 325 234Q342 232 347 248L352 252L320 263Z" fill="#93a9aa" /><path d="M303 265Q298 250 314 247Q325 244 333 255L352 271Z" fill="#c9d3d4" />
          <path d="M307 273Q300 265 312 260L340 249Q347 245 354 253Q366 267 351 273Z" fill="#fff" />
        </Ic>
        <Ic vb="390 219 60 72" className="ml-[10px] h-6 w-5">
          <path d="M410 243H446V272H404V257M446 251H450V264H446" stroke="#fff" strokeWidth="3" /><path d="M410 248H442V268H410Z" fill="#fff" />
          <path d="M392 240H405V249Q399 257 392 249ZM395 240V234M402 240V234M398 253V268H405" stroke="#fff" strokeWidth="3" />
        </Ic>
        <Ic vb="489 219 51 72" className="ml-[13px] h-6 w-[17px]">
          <path d="M490 277Q493 238 535 235M501 277Q504 248 535 246M512 277Q514 258 535 257" stroke="#d8e2e2" strokeWidth="3" /><path d="M522 278Q523 270 534 268V278Z" fill="#fff" />
        </Ic>
        <Ic vb="569 219 63 72" className="ml-[10px] h-6 w-[21px]">
          <path d="M571 248H578L590 237V274L578 264H571Z" stroke="#fff" strokeWidth="3" /><path d="M597 248Q602 255 597 263M606 241Q615 255 606 270M615 233Q628 255 615 278" stroke="#fff" strokeWidth="3" />
        </Ic>
        <Ic vb="660 219 57 72" className="ml-[9px] h-6 w-[19px]">
          <path d="M675 229L688 237L701 229L715 237L702 246L715 254L701 262L688 254L675 262L662 254L674 246L662 237ZM688 238L675 246L688 253L701 246ZM675 266L688 259L701 266L688 277Z" fill="#fff" fillRule="evenodd" />
        </Ic>
        <span className="ml-[14px] w-[29px] whitespace-nowrap text-[14.500px] leading-none tracking-[-0.300px]">ENG</span>
        <div className="ml-[6px] flex w-[89px] flex-col items-center whitespace-nowrap text-[14.500px] leading-[23px] tracking-[-0.200px]">
          <span>9:49 PM</span>
          <span>21/5/2020</span>
        </div>
        <Ic vb="1167 219 60 72" className="ml-[12px] h-6 w-5"><path d="M1169 227H1226V276H1204L1197 283L1190 276H1169Z" stroke="#fff" strokeWidth="3" /></Ic>
        <div className="ml-[25px] h-[50px] w-[6px] border-l border-[#6f9293]" />
      </div>
    </div>
  );
}

export default function App() {
  return (
    <div className="flex h-[1080px] w-[1920px] flex-col overflow-hidden bg-white" style={{ fontFamily: '"Liberation Sans", Arial, sans-serif' }}>
      <TitleBar />
      <TabStrip />
      <Ribbon />
      <div className="relative h-[797px] bg-white">
        <SketchCanvas />
        <Browser />
        <ViewCube />
        <div className="absolute left-[5px] top-[760px]"><PanelHeader label="COMMENTS" plus /></div>
        <NavBar />
      </div>
      <Timeline />
      <Taskbar />
    </div>
  );
}
